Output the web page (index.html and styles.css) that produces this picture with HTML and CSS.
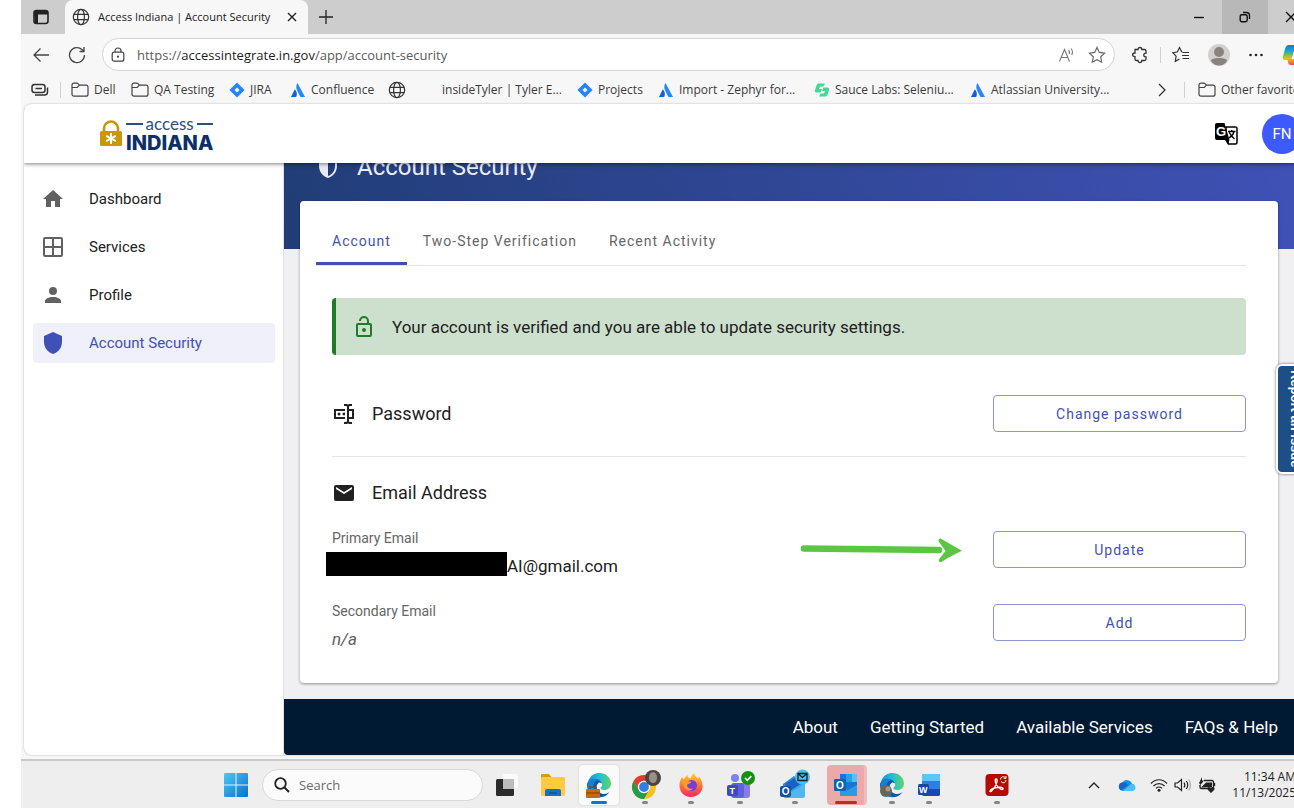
FILE: index.html
```html
<!DOCTYPE html>
<html lang="en">
<head>
  <meta charset="UTF-8">
  <title>Access Indiana | Account Security</title>
  <link rel="stylesheet" href="styles.css">
</head>
<body>
  <!-- Shared symbols -->
  <svg class="sprite" aria-hidden="true">
    <symbol id="globe" viewBox="0 0 18 18"><g fill="none" stroke="#333" stroke-width="1.2"><circle cx="9" cy="9" r="7.7"/><ellipse cx="9" cy="9" rx="3.4" ry="7.7"/><path d="M2 6.3h14M2 11.7h14"/></g></symbol>
    <symbol id="folder" viewBox="0 0 18 16"><path d="M1 5.5h5.2l2.3-2.3M1 3.2c0-1.2.8-2 2-2h2.8c.6 0 1 .2 1.4.6l1.3 1.4H15c1.2 0 2 .8 2 2v7c0 1.200-.8 2-2 2H3c-1.200 0-2-.8-2-2z" fill="none" stroke="#444" stroke-width="1.2"/></symbol>
    <symbol id="jira" viewBox="0 0 16 16"><path d="M8 .4 15.600 8 8 15.600.4 8zM8 5.500 5.500 8 8 10.500 10.500 8z" fill="#2684ff" fill-rule="evenodd"/></symbol>
    <symbol id="atlassian" viewBox="0 0 16 16"><path d="M7.500 1c-1.800 2.800-1.400 5.400-.2 7.800l2.700 5.400c.2.500.5.8 1 .8h4z" fill="#2684ff"/><path d="M4.800 7.200 1 15h4.400c.5 0 .8-.2 1-.6 1-2.200.5-5-1.600-7.200z" fill="#1260d8"/></symbol>
    <symbol id="edge" viewBox="0 0 26 26">
      <path d="M2 10C4 3 9 1 13.500 1 20 1 25 6 25 11.500c0 4-3 6.500-6.500 6.500-3 0-4.500-1.200-4-2.500 1.500-1 2-2.500 1.500-4C14 8 6 6 2 10z" fill="url(#edge-top)"/>
      <path d="M1 13C1 9 5 7 9 7c4 0 7 2.500 7 5.500 0-1.500-2-2.500-3.500-1.500-3 2-3 8 3 10.500 3 1.200 6 .2 8-1.500-2 3.500-6 5.200-10 5.200C6.500 25.200 1 20 1 13z" fill="#0b57a8"/>
      <path d="M2 10c3-4 9-4 12-1-5-2-7 3-6 7.500.7 4 4 7 6 8.500C6 25 0 18 2 10z" fill="#1681cf"/>
    </symbol>
    <linearGradient id="edge-top"><stop offset="0" stop-color="#1c8fdc"/><stop offset=".5" stop-color="#27bfd0"/><stop offset="1" stop-color="#5ed565"/></linearGradient>
    <linearGradient id="win" x2="1" y2="1"><stop offset="0" stop-color="#4cc8f7"/><stop offset="1" stop-color="#0a6fd0"/></linearGradient>
    <linearGradient id="fire" y2="1" x2="0"><stop offset="0" stop-color="#ffd43b"/><stop offset=".5" stop-color="#ff7a2a"/><stop offset="1" stop-color="#f5256b"/></linearGradient>
    <linearGradient id="mailblue" x2="1" y2="1"><stop offset="0" stop-color="#1b78d0"/><stop offset="1" stop-color="#47c4f5"/></linearGradient>
    <linearGradient id="copilot" x2="0" y2="1"><stop offset="0" stop-color="#1475dc"/><stop offset=".3" stop-color="#16a7d8"/><stop offset=".5" stop-color="#7cc242"/><stop offset=".7" stop-color="#ffb526"/><stop offset="1" stop-color="#ee4545"/></linearGradient>
  </svg>

  <div class="screen">
    <div class="window">
      <!-- Tab strip -->
      <div class="tabstrip">
        <button class="tab-actions" aria-label="Tab actions">
          <svg width="16" height="16" viewBox="0 0 16 16"><rect x="1" y="1.500" width="14" height="13" rx="2.500" fill="none" stroke="#222" stroke-width="1.600"/><path d="M1 2h14v3.500H5V14H2z" fill="#222"/></svg>
        </button>
        <div class="browser-tab">
          <svg width="18" height="18"><use href="#globe"/></svg>
          <span class="browser-tab-title">Access Indiana | Account Security</span>
          <button class="tab-close" aria-label="Close tab"><svg width="10" height="10" viewBox="0 0 10 10"><path d="m1 1 8 8m0-8L1 9" stroke="#222" stroke-width="1.400"/></svg></button>
        </div>
        <button class="new-tab" aria-label="New tab"><svg width="16" height="16" viewBox="0 0 16 16"><path d="M8 1v14M1 8h14" stroke="#222" stroke-width="1.300"/></svg></button>
        <div class="window-buttons">
          <button aria-label="Minimize"><svg width="12" height="12" viewBox="0 0 12 12"><path d="M1 6.500h10" stroke="#111" stroke-width="1.400"/></svg></button>
          <button class="hovered" aria-label="Restore"><svg width="12" height="12" viewBox="0 0 12 12"><rect x="1.200" y="3.700" width="7" height="7" rx="1.600" fill="none" stroke="#111" stroke-width="1.400"/><path d="M4 1.500h3.500a3 3 0 0 1 3 3V8" fill="none" stroke="#111" stroke-width="1.300"/></svg></button>
          <button aria-label="Close"><svg width="12" height="12" viewBox="0 0 12 12"><path d="m1 1 10 10m0-10L1 11" stroke="#111" stroke-width="1.400"/></svg></button>
        </div>
      </div>

      <!-- Address bar -->
      <div class="toolbar">
        <button aria-label="Back"><svg width="18" height="16" viewBox="0 0 18 16"><path d="M8.500 1.500 2 8l6.500 6.500M2 8h15" fill="none" stroke="#444" stroke-width="1.300"/></svg></button>
        <button aria-label="Refresh"><svg width="18" height="18" viewBox="0 0 18 18"><path d="M16.500 9A7.500 7.500 0 1 1 14 3.500l2 2M16 1v4.500h-4.500" fill="none" stroke="#444" stroke-width="1.300"/></svg></button>
        <div class="address">
          <svg width="14" height="16" viewBox="0 0 14 16"><rect x="1.200" y="5.200" width="11.600" height="9" rx="2" fill="none" stroke="#444" stroke-width="1.200"/><path d="M4 5V4a3 3 0 0 1 6 0v1" fill="none" stroke="#444" stroke-width="1.200"/><circle cx="7" cy="9.700" r="1.100" fill="#444"/></svg>
          <div class="url">https://<span class="domain">accessintegrate.in.gov</span>/app/account-security</div>
          <button aria-label="Read aloud"><svg width="18" height="18" viewBox="0 0 18 18"><path d="m1.500 15.500 5-12 5 12M3.300 11.500h6.500M10.500 4c1 1 1.200 2.500.7 4M13 2.500c1.700 2 1.700 4.500.7 6.500" fill="none" stroke="#777" stroke-width="1.100"/></svg></button>
          <button aria-label="Add to favorites"><svg width="18" height="18" viewBox="0 0 18 18"><path d="m9 1.500 2.300 4.900 5.300.7-3.900 3.700 1 5.400L9 13.600l-4.700 2.600 1-5.400-3.900-3.700 5.300-.7z" fill="none" stroke="#666" stroke-width="1.200"/></svg></button>
        </div>
        <button aria-label="Extensions"><svg width="18" height="18" viewBox="0 0 18 18"><path d="M4 3.500h3C7 .8 10.800.8 10.800 3.500h2.700c1 0 1.500.5 1.500 1.500v2.200c-3-.2-3 3.600 0 3.600V13c0 1-.5 1.500-1.500 1.500h-2.700c0 2.700-3.800 2.700-3.800 0H5.500C4.500 14.500 4 14 4 13v-2.300C.8 10.700.8 7 4 7z" fill="none" stroke="#333" stroke-width="1.300"/></svg></button>
        <span class="divider"></span>
        <button aria-label="Favorites"><svg width="18" height="18" viewBox="0 0 18 18"><path d="M10.500 6 9.700 5.800 7.500 1.500 5.300 6l-4.500.7 3.300 3.400-.8 5.200 4.200-2.300M10.500 6.500H17M10 9.500h7M10.500 12.500H17" fill="none" stroke="#333" stroke-width="1.200"/></svg></button>
        <button aria-label="Profile"><svg width="22" height="22" viewBox="0 0 22 22"><circle cx="11" cy="11" r="11" fill="#d2cfcc"/><circle cx="11" cy="8" r="5" fill="#888380"/><path d="M3 17c0-2 3-3 8-3s8 1 8 3c-2 3-5 4.500-8 4.500S5 20 3 17z" fill="#888380"/></svg></button>
        <button aria-label="Settings and more"><svg width="16" height="16" viewBox="0 0 16 16"><g fill="#222"><circle cx="2.500" cy="8" r="1.300"/><circle cx="8" cy="8" r="1.300"/><circle cx="13.500" cy="8" r="1.300"/></g></svg></button>
        <button aria-label="Copilot"><svg width="24" height="22" viewBox="0 0 24 22"><path d="M7 1h8c2 0 2.500 1 3 3l.5 2H22c2 0 2 2 1.500 4l-2 7c-.6 2-1.500 4-4 4H9c-2 0-2.500-1-3-3l-.6-2H3c-2.500 0-2.500-2-2-4l2-7c.6-2 1.500-4 4-4zm5 6-2.500 8H12l2.500-8z" fill="url(#copilot)" fill-rule="evenodd"/></svg></button>
      </div>

      <!-- Favorites bar -->
      <nav class="favorites" aria-label="Favorites bar">
        <button aria-label="Workspaces"><svg width="18" height="14" viewBox="0 0 18 14"><rect x="1" y="1.500" width="13" height="8" rx="2.500" fill="none" stroke="#333" stroke-width="1.500"/><path d="M4.500 5.500h6.500M4 12h9.500c2 0 3-1 3-3V4.500" fill="none" stroke="#333" stroke-width="1.500"/></svg></button>
        <span class="divider"></span>
        <a href="#"><svg width="18" height="16"><use href="#folder"/></svg>Dell</a>
        <a href="#"><svg width="18" height="16"><use href="#folder"/></svg>QA Testing</a>
        <a href="#"><svg width="16" height="16"><use href="#jira"/></svg>JIRA</a>
        <a href="#"><svg width="16" height="16"><use href="#atlassian"/></svg>Confluence</a>
        <a href="#" aria-label="Website"><svg width="18" height="18"><use href="#globe"/></svg></a>
        <a href="#">insideTyler | Tyler E...</a>
        <a href="#"><svg width="16" height="16"><use href="#jira"/></svg>Projects</a>
        <a href="#"><svg width="16" height="16"><use href="#atlassian"/></svg>Import - Zephyr for...</a>
        <a href="#"><svg width="16" height="16" viewBox="0 0 16 16"><path d="M5 1.500h6L9.500 4.500H6L5 7h3L6.500 10.500H2.500C1 10.500.6 9.500 1 8l1.500-4.500C3 2 3.700 1.500 5 1.500zM11 14.500H5l1.500-3H10L11 9H8l1.500-3.500h4c1.500 0 1.900 1 1.500 2.500l-1.500 4.500c-.5 1.500-1.200 2-2.500 2z" fill="#3ddc91"/></svg>Sauce Labs: Seleniu...</a>
        <a href="#"><svg width="16" height="16"><use href="#atlassian"/></svg>Atlassian University...</a>
        <button aria-label="More favorites"><svg width="10" height="14" viewBox="0 0 10 14"><path d="m2 1 6 6-6 6" fill="none" stroke="#333" stroke-width="1.300"/></svg></button>
        <span class="divider"></span>
        <a href="#"><svg width="18" height="16"><use href="#folder"/></svg>Other favorites</a>
      </nav>

      <!-- Web page -->
      <div class="page">
        <header class="app-header">
          <a class="brand" href="#">
            <svg width="24" height="28" viewBox="0 0 24 28"><path d="M5 13V9.500a7 7 0 0 1 14 0V13" fill="none" stroke="#c99700" stroke-width="2.600"/><rect x="1" y="12" width="22" height="15" rx="1.500" fill="#c99700"/><path d="M12 14v11M7.200 16.800l9.600 5.400M16.800 16.800l-9.600 5.400" stroke="#fff" stroke-width="2"/></svg>
            <span class="brand-name">
              <span class="brand-top">access</span>
              <span class="brand-bottom">INDIANA</span>
            </span>
          </a>
          <div class="header-actions">
            <button aria-label="Translate">
              <svg width="24" height="24" viewBox="0 0 24 24"><path d="M12 5h9.500c.8 0 1.500.7 1.500 1.500v14c0 .8-.7 1.500-1.500 1.500h-7L12 17z" fill="#fff" stroke="#000" stroke-width="1.500"/><path d="M3 1h7.500l5 17H3c-1.200 0-2-.8-2-2V3c0-1.200.8-2 2-2zM11 18h4.500L14 22.500z"/><text class="glyph" x="2" y="13.500" font-size="13">G</text><path d="M14 9.500h7.500M17.700 8v1.500M20 9.500c-.6 2.800-2.700 5-5 6.300M15.300 10.500c1 2.500 3 4.500 5.200 6.500" fill="none" stroke="#000" stroke-width="1.400"/></svg>
            </button>
            <button class="avatar">FN</button>
          </div>
        </header>

        <div class="app-body">
          <nav class="sidebar" aria-label="Main">
            <a href="#"><svg width="24" height="24" viewBox="0 0 24 24"><path d="M10 20v-6h4v6h5v-8h3L12 3 2 12h3v8z"/></svg>Dashboard</a>
            <a href="#"><svg width="24" height="24" viewBox="0 0 24 24"><path d="M4 2h16a2 2 0 0 1 2 2v16a2 2 0 0 1-2 2H4a2 2 0 0 1-2-2V4a2 2 0 0 1 2-2m0 2v7h7V4H4m0 16h7v-7H4v7m16 0v-7h-7v7h7m0-16h-7v7h7V4z"/></svg>Services</a>
            <a href="#"><svg width="24" height="24" viewBox="0 0 24 24"><path d="M12 4a4 4 0 1 1 0 8 4 4 0 0 1 0-8m0 10c4.420 0 8 1.790 8 4v2H4v-2c0-2.210 3.580-4 8-4z"/></svg>Profile</a>
            <a href="#" class="active"><svg width="24" height="24" viewBox="0 0 24 24"><path d="M12 1 3 5v6c0 5.550 3.840 10.740 9 12 5.160-1.260 9-6.450 9-12V5z"/></svg>Account Security</a>
          </nav>

          <div class="content">
            <main>
              <h1><svg width="24" height="24" viewBox="0 0 24 24"><path d="M12 1 3 5v6c0 5.550 3.840 10.730 9 12 5.160-1.270 9-6.450 9-12V5M12 21V3.180l7 3.120v4.920C19 15.540 16.250 19.780 12 21z"/></svg>Account Security</h1>

              <section class="card">
                <div class="tabs" role="tablist">
                  <button role="tab" class="active" aria-selected="true">Account</button>
                  <button role="tab">Two-Step Verification</button>
                  <button role="tab">Recent Activity</button>
                </div>

                <div class="alert">
                  <svg width="24" height="24" viewBox="0 0 24 24"><path d="M18 20V10H6v10h12m0-12a2 2 0 0 1 2 2v10a2 2 0 0 1-2 2H6c-1.110 0-2-.9-2-2V10a2 2 0 0 1 2-2h9V6a3 3 0 0 0-6 0H7a5 5 0 0 1 10 0v2h1m-6 9a2 2 0 1 1 0-4 2 2 0 0 1 0 4z"/></svg>
                  Your account is verified and you are able to update security settings.
                </div>

                <div class="row password-row">
                  <h2><svg width="24" height="24" viewBox="0 0 24 24"><path d="M17,7H22V17H17V19A1,1 0 0,0 18,20H20V22H17.500C16.950,22 16,21.550 16,21C16,21.550 15.050,22 14.500,22H12V20H14A1,1 0 0,0 15,19V5A1,1 0 0,0 14,4H12V2H14.500C15.050,2 16,2.450 16,3C16,2.450 16.950,2 17.500,2H20V4H18A1,1 0 0,0 17,5V7M2,7H13V9H4V15H13V17H2V7M20,15V9H17V15H20M8.500,12A1.500,1.500 0 0,0 7,10.500A1.500,1.500 0 0,0 5.500,12A1.500,1.500 0 0,0 7,13.500A1.500,1.500 0 0,0 8.500,12M13,10.890C12.390,10.330 11.440,10.380 10.880,11C10.320,11.600 10.370,12.550 11,13.110C11.550,13.630 12.430,13.630 13,13.110V10.890Z"/></svg>Password</h2>
                  <button class="outlined">Change password</button>
                </div>

                <div class="email-section">
                  <h2><svg width="24" height="24" viewBox="0 0 24 24"><path d="m20 8-8 5-8-5V6l8 5 8-5m0-2H4c-1.110 0-2 .890-2 2v12a2 2 0 0 0 2 2h16a2 2 0 0 0 2-2V6c0-1.110-.9-2-2-2z"/></svg>Email Address</h2>
                  <div class="row">
                    <div class="field">
                      <div class="field-label">Primary Email</div>
                      <div class="field-value primary"><span class="redacted"></span>AI@gmail.com</div>
                    </div>
                    <svg class="arrow" width="164" height="28" viewBox="0 0 164 28"><path d="M5 12.500 140 14" fill="none" stroke="#5dc544" stroke-width="6.500" stroke-linecap="round"/><path d="M142 2.700c7 4 14 8 21 12-7 3-14 7-20.500 11.200-2 1-3.500-1-2.500-2.600l6.500-8.300-6.700-9.500c-1.200-2 .7-3.800 2.200-2.800z" fill="#5dc544"/></svg>
                    <button class="outlined">Update</button>
                  </div>
                  <div class="row">
                    <div class="field">
                      <div class="field-label">Secondary Email</div>
                      <div class="field-value empty">n/a</div>
                    </div>
                    <button class="outlined">Add</button>
                  </div>
                </div>
              </section>
            </main>

            <footer class="app-footer">
              <a href="#">About</a>
              <a href="#">Getting Started</a>
              <a href="#">Available Services</a>
              <a href="#">FAQs &amp; Help</a>
            </footer>
          </div>
        </div>
        <button class="report">Report an Issue</button>
      </div>
    </div>

    <!-- Taskbar -->
    <div class="taskbar">
      <button class="start" aria-label="Start"><svg width="24" height="24" viewBox="0 0 24 24"><path d="M0 1a1 1 0 0 1 1-1h10.500v11.500H0zM12.500 0H23a1 1 0 0 1 1 1v10.500H12.500zM0 12.500h11.500V24H1a1 1 0 0 1-1-1zM12.500 12.500H24V23a1 1 0 0 1-1 1H12.500z" fill="url(#win)"/></svg></button>
      <label class="search">
        <svg width="16" height="16" viewBox="0 0 16 16"><circle cx="6.500" cy="6.500" r="5.300" fill="none" stroke="#222" stroke-width="1.800"/><path d="m10.500 10.500 4.500 4.500" stroke="#222" stroke-width="1.900"/></svg>
        <input type="text" placeholder="Search" aria-label="Search">
      </label>
      <div class="apps">
        <button class="task" aria-label="Task view"><svg width="26" height="26" viewBox="0 0 26 26"><path d="M9 2h13a2 2 0 0 1 2 2v12H9z" fill="#fafafa"/><rect x="2" y="7" width="18" height="17" rx="1.500" fill="#2b2b2b"/><path d="M9 7h11v10H9z" fill="#bdbdbd"/></svg></button>
        <button class="task" aria-label="File Explorer"><svg width="26" height="26" viewBox="0 0 26 26"><path d="M1 3a1 1 0 0 1 1-1h7l2.500 3H24v5H1z" fill="#d89a12"/><rect x="1" y="5" width="24" height="19" rx="1.500" fill="#fdca41"/><path d="M5 24v-5a2 2 0 0 1 2-2h12a2 2 0 0 1 2 2v5z" fill="#1571c4"/><path d="M9 21h8" stroke="#0b4d91" stroke-width="1.300"/></svg></button>
        <button class="task current" aria-label="Edge"><svg width="26" height="26" viewBox="0 0 26 26"><use href="#edge"/><rect x="0" y="17" width="14" height="9" rx="1" fill="#c36a17"/><path d="M4 17v-2h6v2M0 21h14" fill="none" stroke="#7d3d06" stroke-width="1.200"/></svg></button>
        <button class="task running" aria-label="Chrome"><svg width="32" height="32" viewBox="0 0 32 32"><circle cx="15" cy="18" r="12" fill="#fbc116"/><path d="M4.600 12A12 12 0 0 0 15 30l5.200-9L15 18l-5.200 3z" fill="#229b4b"/><path d="M4.600 12A12 12 0 0 1 25.400 12H15l-5.200 9z" fill="#e33b2e"/><circle cx="15" cy="18" r="6.200" fill="#fff"/><circle cx="15" cy="18" r="4.900" fill="#2f7de9"/><circle cx="24" cy="9" r="8" fill="#4d4540"/><ellipse cx="24" cy="8.500" rx="4" ry="5.500" fill="#9b9089"/></svg></button>
        <button class="task running" aria-label="Firefox"><svg width="26" height="26" viewBox="0 0 26 26"><path d="M4 5c.5 1 1 1.500 2 2 1-2 2-3 3.500-4 0 2 1 3 3 3.500C13 4 15 2 16.500.8c0 3 2 4.200 3.500 6l1-2.300c3 4 4 7 3.500 11C23.500 21.500 18.500 25 13 25 6 25 1.500 20 1.500 13.500 1.500 10 2.500 7 4 5z" fill="url(#fire)"/><circle cx="13.500" cy="13.500" r="5.500" fill="#7b3bd8"/><path d="M4 9c4-1.500 6 1 9.500.5-1 2.500-4 2-4.500 4 0 2 3 4 6 3-3 4-9 2-11-7.500z" fill="#ff9a2e"/></svg></button>
        <button class="task running teams" aria-label="Teams"><svg width="30" height="32" viewBox="0 0 30 32"><circle cx="10" cy="9" r="4" fill="#7b83eb"/><rect x="12" y="14" width="13" height="15" rx="3" fill="#8b78ea"/><rect x="6" y="14" width="13" height="15" rx="3" fill="#5a63dd"/><rect x="2" y="16" width="11" height="11" rx="2" fill="#4148b8"/><text class="glyph" x="4.500" y="24.800" font-size="9">T</text><circle cx="23" cy="9" r="7" fill="#13910f"/><path d="m20 9 2.300 2.300L26.300 7.200" fill="none" stroke="#fff" stroke-width="1.700"/></svg></button>
        <button class="task running mail" aria-label="Outlook (new)"><svg width="30" height="32" viewBox="0 0 30 32"><path d="M3 15 14 7l11 6v13a3 3 0 0 1-3 3H6a3 3 0 0 1-3-3z" fill="url(#mailblue)"/><path d="M5 15 15 9l7 5-12 8z" fill="#1a61c4"/><path d="M9 24 25 15v11a3 3 0 0 1-3 3H9z" fill="#4fb8f2"/><rect x="0" y="17" width="11" height="11" rx="2" fill="#104ea8"/><text class="glyph" x="1.800" y="26" font-size="10">O</text><circle cx="22.500" cy="8" r="7.500" fill="#59b9e8"/><path d="M18 4.500h9v7h-9zl4.500 4 4.500-4" fill="none" stroke="#123" stroke-width="1.300"/></svg></button>
        <button class="task alerting" aria-label="Outlook"><svg width="26" height="26" viewBox="0 0 26 26"><path d="M7 2h17v22H7z" fill="#1976d2"/><path d="M13 2h6v8h-6z" fill="#2aa0e8"/><path d="M19 2h5v8h-5z" fill="#4fc3f7"/><path d="M7 24V14l8 4 9-5v11z" fill="#2a9be6"/><rect x="1" y="7" width="12" height="12" rx="1" fill="#0f62b5"/><text class="glyph" x="3" y="16.600" font-size="10">O</text></svg></button>
        <button class="task running second" aria-label="Edge profile 2"><svg width="26" height="26" viewBox="0 0 26 26"><use href="#edge"/><circle cx="7" cy="19" r="6" fill="#6e6253"/><circle cx="9" cy="17" r="2.500" fill="#a69a86"/></svg></button>
        <button class="task running word" aria-label="Word"><svg width="24" height="26" viewBox="0 0 24 26"><rect x="5" y="2" width="18" height="22" rx="2" fill="#2f7fe0"/><path d="M5 9V4a2 2 0 0 1 2-2h14a2 2 0 0 1 2 2v5z" fill="#5cc6f6"/><path d="M5 17h18v5a2 2 0 0 1-2 2H7a2 2 0 0 1-2-2z" fill="#1747b8"/><rect x="1" y="12" width="11" height="11" rx="1.500" fill="#1648a8"/><text class="glyph" x="2" y="20.600" font-size="9">W</text></svg></button>
        <button class="task running acrobat" aria-label="Acrobat"><svg width="24" height="24" viewBox="0 0 24 24"><rect x=".5" y="1" width="23" height="22" rx="4" fill="#b30b00"/><path d="M11 6c2 0 1 4-1 7.500S5 20 5 18s5-3.500 9-3.800 5 2.300 3 2.300-6-4-6.500-7S10.300 6 11 6z" fill="none" stroke="#fff" stroke-width="1.400"/><path d="M15.500 6.500A2.700 2.700 0 0 1 20.500 5M21 3v2.300h-2.200M21 7a2.700 2.700 0 0 1-5 1.500" fill="none" stroke="#fff"/></svg></button>
      </div>
      <div class="tray">
        <button aria-label="Hidden icons"><svg width="12" height="8" viewBox="0 0 12 8"><path d="m1 7 5-5 5 5" fill="none" stroke="#222" stroke-width="1.400"/></svg></button>
        <button aria-label="OneDrive"><svg width="18" height="12" viewBox="0 0 18 12"><path d="M5 12a4.500 4.500 0 0 1-.5-8.500A5.300 5.300 0 0 1 14 4.800 3.700 3.700 0 0 1 14 12z" fill="#1490e8"/><path d="M5 12 13 5c3-.5 4.500 1.500 4.500 3.500S16 12 14 12z" fill="#4cc0fa"/><path d="M1 6c1-3 6-4 9 0l-7 5.500C1 10.500.3 8 1 6z" fill="#1264ce"/></svg></button>
        <button aria-label="Wi-Fi"><svg width="18" height="14" viewBox="0 0 18 14"><path d="M1 5.500c4.500-5 11.500-5 16 0M3.500 8c3-3.300 8-3.300 11 0M6 10.300c1.700-1.700 4.300-1.700 6 0" fill="none" stroke="#222" stroke-width="1.200"/><circle cx="9" cy="12.300" r="1.500" fill="#222"/></svg></button>
        <button aria-label="Volume"><svg width="18" height="14" viewBox="0 0 18 14"><path d="M1 5h2.500L7.500 1.500v11L3.500 9H1zM10 4.500c1 1.500 1 3.500 0 5M12.300 3c1.800 2.500 1.800 5.500 0 8" fill="none" stroke="#222" stroke-width="1.200"/><path d="M14.600 1.500c2.400 3.500 2.400 7.500 0 11" fill="none" stroke="#aaa" stroke-width="1.200"/></svg></button>
        <button aria-label="Battery"><svg width="18" height="16" viewBox="0 0 18 16"><path d="M6 3.500h8a1.500 1.500 0 0 1 1.500 1.500v5a1.500 1.500 0 0 1-1.500 1.500H3.500A1.500 1.500 0 0 1 2 10V8" fill="none" stroke="#222" stroke-width="1.400"/><path d="M3 10.500 8 5.500h6V10zM1 6 4 0v3.500h2L2.500 8zM13 16l-3.300-3.300c-1.200-2 1.800-3.700 3.300-1.700 1.500-2 4.500-.3 3.300 1.700zM15.500 6h1.700v3h-1.700z" fill="#222"/></svg></button>
        <div class="clock">11:34 AM<br>11/13/2025</div>
      </div>
    </div>
  </div>
</body>
</html>
```
FILE: styles.css
```css
* {
  box-sizing: border-box;
}

body {
  margin: 0;
  background: #fff;
  font-family: Roboto, "Liberation Sans", sans-serif;
  color: #212121;
  overflow: hidden;
}

button {
  padding: 0;
  border: none;
  background: none;
  font: inherit;
  color: inherit;
  cursor: pointer;
}

a {
  color: inherit;
  text-decoration: none;
}

svg {
  display: block;
  flex: none;
}

h1,
h2 {
  margin: 0;
  font-weight: 400;
  display: flex;
  align-items: center;
}

.sprite {
  position: absolute;
  width: 0;
  height: 0;
}

.glyph {
  font-family: "Liberation Sans", sans-serif;
  font-weight: bold;
  fill: #fff;
}

/* the desktop is a little wider than the viewport */
.screen {
  min-height: 100vh;
  margin-left: 21px;
  margin-right: -20px;
  display: flex;
  flex-direction: column;
}

.window {
  flex: 1;
  display: flex;
  flex-direction: column;
  background: #f7f7f7;
  font-family: "Open Sans", "Noto Sans", sans-serif;
  font-size: 12px;
}

/* Tab strip */
.tabstrip {
  display: flex;
  height: 34px;
  background: #cdcdcd;
}

.tab-actions {
  width: 44px;
  padding: 0 12px;
}

.browser-tab {
  display: flex;
  align-items: center;
  gap: 8px;
  width: 243px;
  padding: 0 11px 0 7px;
  background: #f7f7f7;
  border-radius: 8px 8px 0 0;
}

.browser-tab-title {
  flex: 1;
  font-size: 11px;
  line-height: 14px;
  white-space: nowrap;
}

.new-tab {
  padding: 0 10px;
}

.window-buttons {
  display: flex;
  margin-left: auto;
}

.window-buttons button {
  display: grid;
  place-items: center;
  width: 46px;
}

.window-buttons .hovered {
  background: #b8b8b8;
}

/* Address bar */
.toolbar {
  display: flex;
  align-items: center;
  gap: 18px;
  height: 41px;
  padding: 0 8px 0 11px;
}

.address {
  flex: 1;
  display: flex;
  align-items: center;
  gap: 12px;
  height: 33px;
  margin: 0 -2px;
  padding: 0 8px;
  background: #fff;
  border: 1px solid #d4d4d4;
  border-radius: 17px;
}

.url {
  flex: 1;
  font-size: 13px;
  color: #5c5c5c;
}

.domain {
  color: #1c1c1c;
}

.divider {
  width: 1px;
  height: 16px;
  background: #d0d0d0;
}

.toolbar .divider {
  margin: 0 -7px;
}

/* Favorites bar */
.favorites {
  display: grid;
  grid-template-columns: 29px 11px 60px 98px 61px 98px 54px 135px 81px 156px 156px 187px 27px 14px 1fr;
  align-items: center;
  height: 29px;
  padding-left: 10px;
  color: #3b3b3b;
  white-space: nowrap;
}

.favorites a {
  display: flex;
  align-items: center;
  gap: 5px;
}

/* Web page */
.page {
  position: relative;
  flex: 1;
  display: flex;
  flex-direction: column;
  margin: 0 0 4px 3px;
  background: #fff;
  border-radius: 8px;
  overflow: hidden;
  font-family: Roboto, "Liberation Sans", sans-serif;
  font-size: 15px;
  box-shadow: 0 0 2px rgba(0, 0, 0, 0.3);
}

.app-header {
  position: relative;
  z-index: 1;
  display: flex;
  align-items: center;
  justify-content: space-between;
  height: 59px;
  padding: 0 12px 0 75px;
  background: #fff;
  box-shadow: 0 1px 4px rgba(0, 0, 0, 0.5);
}

.brand {
  display: flex;
  align-items: center;
  gap: 3px;
  padding-bottom: 2px;
  color: #0b2f66;
}

.brand-name {
  display: flex;
  flex-direction: column;
}

.brand-top {
  display: flex;
  align-items: center;
  gap: 3px;
  font-family: Lato, sans-serif;
  font-size: 17px;
  line-height: 20px;
  color: #2d4f7c;
}

.brand-top::before,
.brand-top::after {
  content: "";
  flex: 1;
  height: 2px;
  background: #2d4f7c;
}

.brand-bottom {
  font-family: Inter, sans-serif;
  font-size: 20px;
  line-height: 18px;
  font-weight: 800;
}

.header-actions {
  display: flex;
  align-items: center;
  gap: 24px;
}

.avatar {
  width: 40px;
  height: 40px;
  border-radius: 50%;
  background: #3d5afe;
  color: #fff;
}

.app-body {
  flex: 1;
  display: flex;
}

.sidebar {
  display: flex;
  flex-direction: column;
  gap: 8px;
  width: 260px;
  padding: 16px 8px 16px 9px;
  border-right: 1px solid #e0e0e0;
}

.sidebar a {
  display: flex;
  align-items: center;
  gap: 24px;
  height: 40px;
  padding: 0 8px;
  border-radius: 4px;
}

.sidebar svg {
  fill: #616161;
}

.sidebar .active {
  background: #eff0f9;
  color: #3f51b5;
}

.sidebar .active svg {
  fill: #3f51b5;
}

.content {
  flex: 1;
  display: flex;
  flex-direction: column;
  margin-right: 20px;
}

main {
  flex: 1;
  padding: 0 16px 16px;
  background: linear-gradient(80deg, #213d77, #3f51b5) top / 100% 86px no-repeat #f0f0f2;
}

h1 {
  gap: 17px;
  margin-top: -12px;
  padding: 0 16px;
  font-size: 24px;
  line-height: 32px;
  color: #e9ecf6;
}

h1 svg {
  fill: #e9ecf6;
}

.card {
  margin-top: 18px;
  padding: 16px 32px 28px;
  background: #fff;
  border-radius: 4px;
  box-shadow: 0 1px 3px rgba(0, 0, 0, 0.4);
}

.tabs {
  display: flex;
  height: 49px;
  margin-left: -16px;
  border-bottom: 1px solid #e4e4e4;
}

.tabs button {
  padding: 0 16px;
  font-size: 14px;
  letter-spacing: 1px;
  color: #666;
}

.tabs .active {
  color: #3f51b5;
  border-bottom: 3px solid #3f51b5;
  border-top: 3px solid transparent;
}

.alert {
  display: flex;
  align-items: center;
  gap: 16px;
  height: 57px;
  margin-top: 32px;
  padding: 0 16px;
  border-left: 4px solid #217a28;
  border-radius: 4px;
  background: #cde0ce;
  font-size: 17px;
}

.alert svg {
  fill: #217a28;
}

.row {
  display: flex;
  align-items: center;
  justify-content: space-between;
}

.password-row {
  margin-top: 16px;
  padding: 24px 0;
  border-bottom: 1px solid #e4e4e4;
}

h2 {
  gap: 16px;
  font-size: 18px;
  line-height: 24px;
}

h2 svg {
  fill: #212121;
}

.outlined {
  width: 28%;
  max-width: 253px;
  height: 37px;
  border: 1px solid #8c96d3;
  border-radius: 4px;
  font-size: 14px;
  letter-spacing: 1px;
  color: #3f51b5;
}

.email-section {
  display: flex;
  flex-direction: column;
  gap: 8px;
  padding-top: 24px;
}

.email-section h2 {
  margin-bottom: 4px;
}

.email-section .row {
  min-height: 65px;
}

.field {
  flex: 1;
  padding-top: 8px;
}

.field-label {
  font-size: 14px;
  line-height: 24px;
  color: #666;
}

.field-value {
  font-size: 17px;
  line-height: 32px;
}

.primary {
  display: flex;
}

.redacted {
  width: 181px;
  height: 24px;
  margin: 2px 0 0 -6px;
  background: #000;
}

.empty {
  font-style: italic;
  color: #616161;
}

.arrow {
  margin-right: 30px;
}

.app-footer {
  display: flex;
  align-items: center;
  justify-content: flex-end;
  gap: 32px;
  height: 56px;
  margin-right: -20px;
  padding: 0 36px 0 16px;
  background: #001a33;
  border-radius: 0 0 0 4px;
  color: #fff;
  font-size: 17px;
}

/* pinned over the right edge of the page */
.report {
  position: absolute;
  right: 0;
  top: 260px;
  width: 38px;
  height: 110px;
  border: 2px solid #fff;
  border-radius: 6px 0 0 6px;
  background: #1d4f86;
  box-shadow: 0 0 3px rgba(0, 0, 0, 0.6);
  color: #fff;
  font-family: "Liberation Sans", sans-serif;
  font-size: 13px;
  font-weight: bold;
  writing-mode: vertical-rl;
}

/* Taskbar */
.taskbar {
  display: flex;
  align-items: center;
  height: 49px;
  padding-right: 18px;
  background: #eee;
  border-top: 2px solid #c8c8c8;
  font-family: "Open Sans", "Noto Sans", sans-serif;
}

.start {
  margin-left: 203px;
}

.search {
  display: flex;
  align-items: center;
  gap: 9px;
  width: 221px;
  height: 32px;
  margin: 0 4px 0 14px;
  padding: 0 11px;
  background: #fbfbfb;
  border: 1px solid #d8d8d8;
  border-radius: 16px;
}

.search input {
  flex: 1;
  min-width: 0;
  padding: 0;
  border: none;
  outline: none;
  background: none;
  font: inherit;
  font-size: 13px;
}

.search input::placeholder {
  color: #6b6b6b;
}

.apps {
  display: flex;
  gap: 6px;
}

.task {
  position: relative;
  display: grid;
  place-items: center;
  width: 40px;
  height: 40px;
  border-radius: 4px;
}

.running::after,
.current::after,
.alerting::after {
  content: "";
  position: absolute;
  left: 50%;
  bottom: 1px;
  width: 6px;
  height: 3px;
  margin-left: -3px;
  border-radius: 2px;
  background: #858585;
}

.current {
  background: #fafafa;
  box-shadow: 0 0 2px rgba(0, 0, 0, 0.2);
}

.current::after {
  width: 16px;
  margin-left: -8px;
  background: #0078d4;
}

.alerting {
  background: #ebaaa8;
  border-right: 3px solid #f0bcba;
}

.alerting::after {
  width: 22px;
  margin-left: -11px;
  background: #c42b1c;
}

.teams {
  width: 46px;
}

.mail {
  width: 52px;
}

.second {
  width: 38px;
}

.word {
  width: 24px;
}

.acrobat {
  margin-left: 30px;
}

.tray {
  display: flex;
  align-items: center;
  gap: 6px;
  margin-left: auto;
  white-space: nowrap;
}

.tray button:first-child {
  margin-right: 12px;
}

.tray button:nth-child(2) {
  margin-right: 8px;
}

.clock {
  margin-left: 10px;
  font-size: 12px;
  line-height: 16px;
  text-align: right;
}
```
